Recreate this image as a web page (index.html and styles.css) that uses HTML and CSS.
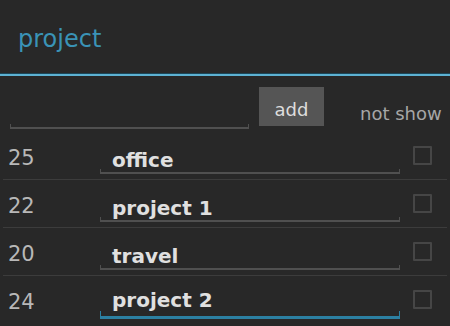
FILE: index.html
```html
<!DOCTYPE html>
<html>
<head>
<meta charset="utf-8">
<link rel="stylesheet" href="styles.css">
</head>
<body>
<div class="screen">
  <div class="titlebar">project</div>
  <div class="toolbar">
    <div class="field search"></div>
    <div class="add-btn">add</div>
    <div class="not-show">not show</div>
  </div>
  <div class="row">
    <div class="num">25</div>
    <div class="field">office</div>
    <div class="check"></div>
  </div>
  <div class="row">
    <div class="num">22</div>
    <div class="field">project 1</div>
    <div class="check"></div>
  </div>
  <div class="row">
    <div class="num">20</div>
    <div class="field">travel</div>
    <div class="check"></div>
  </div>
  <div class="row last">
    <div class="num">24</div>
    <div class="field focused">project 2</div>
    <div class="check"></div>
  </div>
</div>
</body>
</html>
```
FILE: styles.css
```css
html, body {
  margin: 0;
  padding: 0;
  background: #282828;
}
.screen {
  width: 450px;
  height: 326px;
  overflow: hidden;
  background: #282828;
  font-family: "DejaVu Sans", sans-serif;
}
.titlebar {
  box-sizing: border-box;
  height: 76px;
  padding: 25px 0 0 18px;
  font-size: 24px;
  line-height: 28px;
  color: #3a93b6;
  border-bottom: 2px solid #5db2d3;
  box-shadow: inset 0 -1px 0 #1c4657;
}
.toolbar {
  display: flex;
  align-items: flex-start;
  height: 56px;
}
.field {
  position: relative;
  box-sizing: border-box;
  border-bottom: 2px solid #505050;
}
.field::after {
  content: "";
  position: absolute;
  left: 0;
  right: 0;
  bottom: 0;
  height: 3px;
  border-left: 1px solid #505050;
  border-right: 1px solid #505050;
}
.search {
  width: 239px;
  height: 53px;
  margin-left: 10px;
}
.add-btn {
  box-sizing: border-box;
  width: 65px;
  height: 39px;
  margin: 11px 0 0 10px;
  padding-top: 12px;
  background: #555555;
  color: #dddddd;
  font-size: 18px;
  line-height: 21px;
  text-align: center;
}
.not-show {
  margin: 27px 0 0 36px;
  font-size: 18px;
  line-height: 21px;
  color: #a6a6a6;
  white-space: nowrap;
}
.row {
  display: flex;
  align-items: flex-start;
  height: 47px;
  margin: 0 3px;
  border-bottom: 1px solid #3c3c3c;
}
.row.last {
  border-bottom: none;
}
.num {
  box-sizing: border-box;
  width: 97px;
  padding: 14px 0 0 5px;
  font-size: 21px;
  line-height: 24px;
  color: #b8b8b8;
}
.row .field {
  width: 300px;
  height: 42px;
  padding: 16px 0 0 12px;
  font-size: 20px;
  line-height: 24px;
  font-weight: bold;
  color: #e0e0e0;
  white-space: nowrap;
}
.row .field.focused {
  border-bottom: 3px solid #2c80a2;
  height: 43px;
  padding-top: 12px;
}
.row .field.focused::after {
  border-color: #2c80a2;
  height: 5px;
}
.check {
  box-sizing: border-box;
  width: 19px;
  height: 19px;
  margin: 14px 0 0 13px;
  border: 2px solid #464646;
  border-radius: 1px;
}
```
